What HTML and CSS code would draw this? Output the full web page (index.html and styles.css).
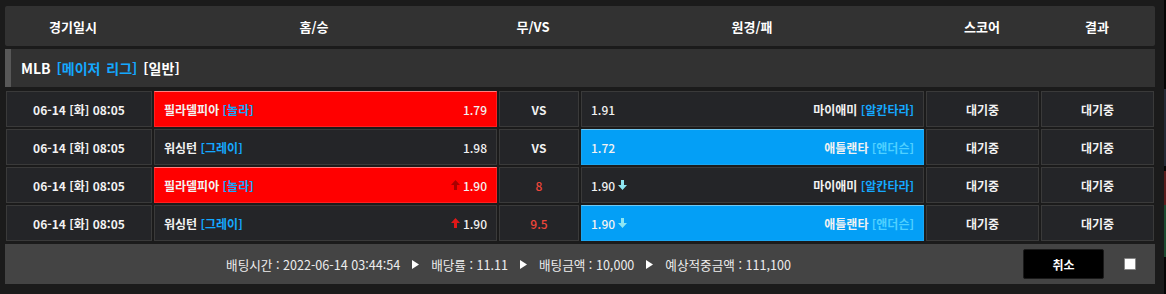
FILE: index.html
```html
<!DOCTYPE html>
<html lang="ko">
<head>
<meta charset="utf-8">
<title>Bet slip</title>
<link rel="stylesheet" href="styles.css">
</head>
<body>
<div class="board">
  <div class="head">
    <div>경기일시</div>
    <div>홈/승</div>
    <div>무/VS</div>
    <div>원경/패</div>
    <div>스코어</div>
    <div>결과</div>
  </div>
  <div class="league"><span>MLB <span class="sky">[메이저 리그]</span> [일반]</span></div>
  <div class="rows">
    <div class="row">
      <div class="cell c">06-14 [화] 08:05</div>
      <div class="cell team home red"><span>필라델피아 <span class="sky">[놀라]</span></span><span class="odd">1.79</span></div>
      <div class="cell c">VS</div>
      <div class="cell team away"><span class="odd">1.91</span><span>마이애미 <span class="sky">[알칸타라]</span></span></div>
      <div class="cell c">대기중</div>
      <div class="cell c">대기중</div>
    </div>
    <div class="row">
      <div class="cell c">06-14 [화] 08:05</div>
      <div class="cell team home"><span>워싱턴 <span class="sky">[그레이]</span></span><span class="odd">1.98</span></div>
      <div class="cell c">VS</div>
      <div class="cell team away blue"><span class="odd">1.72</span><span>애틀랜타 <span class="sky">[앤더슨]</span></span></div>
      <div class="cell c">대기중</div>
      <div class="cell c">대기중</div>
    </div>
    <div class="row">
      <div class="cell c">06-14 [화] 08:05</div>
      <div class="cell team home red"><span>필라델피아 <span class="sky">[놀라]</span></span><span class="odd"><svg class="up dark" width="9" height="10" viewBox="0 0 9 10"><path d="M4.5 0 L9 5 L6 5 L6 10 L3 10 L3 5 L0 5 Z"/></svg>1.90</span></div>
      <div class="cell c redtxt">8</div>
      <div class="cell team away"><span class="odd">1.90<svg class="down" width="9" height="10" viewBox="0 0 9 10"><path d="M4.5 10 L9 5 L6 5 L6 0 L3 0 L3 5 L0 5 Z"/></svg></span><span>마이애미 <span class="sky">[알칸타라]</span></span></div>
      <div class="cell c">대기중</div>
      <div class="cell c">대기중</div>
    </div>
    <div class="row">
      <div class="cell c">06-14 [화] 08:05</div>
      <div class="cell team home"><span>워싱턴 <span class="sky">[그레이]</span></span><span class="odd"><svg class="up" width="9" height="10" viewBox="0 0 9 10"><path d="M4.5 0 L9 5 L6 5 L6 10 L3 10 L3 5 L0 5 Z"/></svg>1.90</span></div>
      <div class="cell c redtxt">9.5</div>
      <div class="cell team away blue"><span class="odd">1.90<svg class="down" width="9" height="10" viewBox="0 0 9 10"><path d="M4.5 10 L9 5 L6 5 L6 0 L3 0 L3 5 L0 5 Z"/></svg></span><span>애틀랜타 <span class="sky">[앤더슨]</span></span></div>
      <div class="cell c">대기중</div>
      <div class="cell c">대기중</div>
    </div>
  </div>
  <div class="foot">
    <div class="summary">
      <span>배팅시간 : 2022-06-14 03:44:54</span>
      <svg class="tri" width="7" height="9" viewBox="0 0 7 9"><path d="M0 0 L7 4.5 L0 9 Z"/></svg>
      <span>배당률 : 11.11</span>
      <svg class="tri" width="7" height="9" viewBox="0 0 7 9"><path d="M0 0 L7 4.5 L0 9 Z"/></svg>
      <span>배팅금액 : 10,000</span>
      <svg class="tri" width="7" height="9" viewBox="0 0 7 9"><path d="M0 0 L7 4.5 L0 9 Z"/></svg>
      <span>예상적중금액 : 111,100</span>
    </div>
    <div class="cancel">취소</div>
    <div class="check"></div>
  </div>
</div>
<div class="edge">
  <div class="seg s1"></div>
  <div class="seg s2"></div>
  <div class="seg s3"></div>
  <div class="seg s4"></div>
</div>
</body>
</html>
```
FILE: styles.css
```css
html, body {
  margin: 0;
  padding: 0;
  background: #1b1b1b;
}
body {
  display: flex;
  align-items: flex-start;
  width: 1166px;
  height: 294px;
  overflow: hidden;
  font-family: "Noto Sans CJK KR", "Noto Sans", sans-serif;
  color: #fff;
}
.board {
  width: 1150px;
  margin: 6px 0 0 5px;
  display: flex;
  flex-direction: column;
}
.head {
  height: 40px;
  background: #323232;
  border-radius: 2px;
  display: grid;
  grid-template-columns: 136px 346px 92px 346px 114px 116px;
  align-items: center;
  text-align: center;
  font-size: 13px;
  font-weight: 700;
}
.league {
  margin-top: 3px;
  height: 38px;
  background: #323232;
  border-left: 6px solid #585858;
  padding-left: 10px;
  display: flex;
  align-items: center;
  font-size: 14px;
  font-weight: 700;
  word-spacing: 2px;
  white-space: pre;
}
.sky { color: #14a8ff; }
.blue .sky { color: #4fd0ff; }
.rows {
  margin: 4px 0 0 1px;
  display: flex;
  flex-direction: column;
  gap: 2px;
}
.row {
  height: 36px;
  display: grid;
  grid-template-columns: 146px 343px 80px 343px 113px 113px;
  gap: 2px;
}
.cell {
  box-sizing: border-box;
  background: #242528;
  border: 1px solid #3a3a3a;
  display: flex;
  align-items: center;
  font-size: 12px;
  font-weight: 700;
  color: #f2f2f2;
}
.c { justify-content: center; }
.team {
  justify-content: space-between;
  padding: 0 9px;
  white-space: pre;
}
.red {
  background: #ff0000;
  border-color: #ff2020;
  border-top-color: #ff8080;
}
.blue {
  background: #049ff6;
  border-color: #1aa6f2;
  border-top-color: #70c8f2;
}
.odd {
  display: flex;
  align-items: center;
  font-weight: 500;
}
.redtxt {
  color: #f0463a;
  font-weight: 500;
}
.up { margin-right: 3px; fill: #e01818; }
.up.dark { fill: #a80000; }
.down { margin-left: 3px; fill: #8ee6f2; }
.foot {
  margin-top: 3px;
  height: 40px;
  background: #444;
  display: flex;
  align-items: center;
}
.summary {
  flex: 1;
  display: flex;
  justify-content: center;
  align-items: center;
  font-size: 12.6px;
  color: #ededed;
  padding-left: 2px;
}
.tri {
  fill: #fff;
  margin: 0 12px;
}
.cancel {
  width: 81px;
  height: 30px;
  box-sizing: border-box;
  background: #000;
  border: 1px solid #1a1a1a;
  border-radius: 2px;
  margin-left: 13px;
  display: flex;
  align-items: center;
  justify-content: center;
  font-size: 12px;
  font-weight: 700;
}
.check {
  width: 12px;
  height: 12px;
  box-sizing: border-box;
  background: #fff;
  border: 1px solid #888;
  border-radius: 1px;
  margin: 0 19px 0 20px;
}
.edge {
  margin-left: 9px;
  width: 2px;
  height: 294px;
  background: #050505;
  display: flex;
  flex-direction: column;
}
.seg { width: 2px; }
.s1 { height: 84px; }
.s2 { margin-top: 5px; height: 77px; background: #262b36; }
.s3 { margin-top: 5px; height: 34px; background: #5a1c1c; }
.s4 { height: 52px; background: #1c4a30; }
```
